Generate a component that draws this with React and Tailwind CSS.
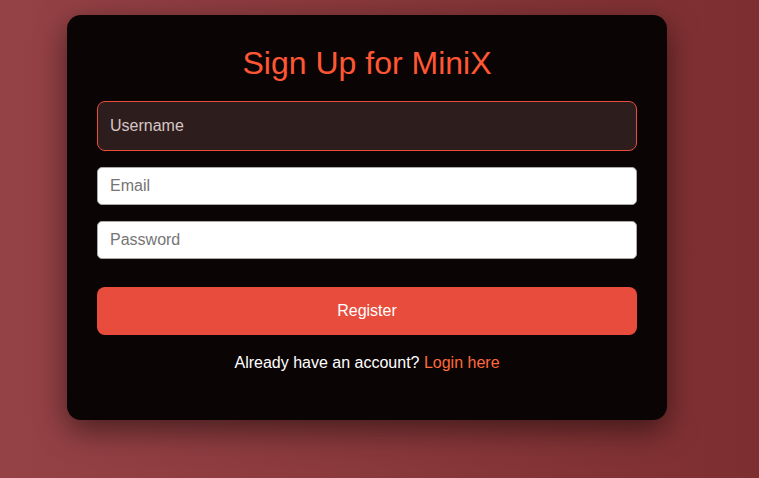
export default function App() {
  return (
    <div className="min-h-[478px] w-full bg-gradient-to-r from-[#954246] to-[#7d2e30] font-['Liberation_Sans',Arial,sans-serif] flex justify-center pt-[15px] pr-[25px]">
      <div className="w-[600px] h-[405px] bg-[#0b0404] rounded-[14px] shadow-[0_10px_30px_rgba(0,0,0,0.5)] px-[30px] pt-[30px]">
        <h1 className="text-[32px] leading-[37px] text-center text-[#ff5733]">Sign Up for MiniX</h1>

        <div className="mt-[19px] flex flex-col">
          <input
            type="text"
            placeholder="Username"
            className="h-[50px] w-full rounded-[8px] border border-[#e74c3c] bg-[#2e1d1d] px-[12px] text-[16px] text-[#e0d0d0] placeholder:text-[#d6c6c6] outline-none"
          />
          <input
            type="email"
            placeholder="Email"
            className="mt-[16px] h-[38px] w-full rounded-[5px] border border-[#aaa] bg-white px-[12px] text-[16px] placeholder:text-[#757575] outline-none"
          />
          <input
            type="password"
            placeholder="Password"
            className="mt-[16px] h-[38px] w-full rounded-[5px] border border-[#aaa] bg-white px-[12px] text-[16px] placeholder:text-[#757575] outline-none"
          />
          <button className="mt-[28px] h-[48px] w-full rounded-[8px] bg-[#e74c3c] text-[16px] text-white">
            Register
          </button>
        </div>

        <p className="mt-[19px] text-center text-[16px] leading-[18px] text-white">
          Already have an account? <a href="#" className="text-[#ff6a3d]">Login here</a>
        </p>
      </div>
    </div>
  );
}
